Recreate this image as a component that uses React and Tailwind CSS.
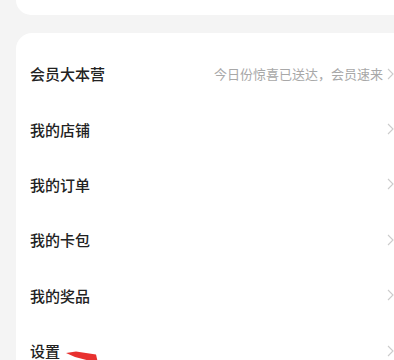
import React from 'react';

const rows = [
  { label: '会员大本营', hint: '今日份惊喜已送达，会员速来' },
  { label: '我的店铺' },
  { label: '我的订单' },
  { label: '我的卡包' },
  { label: '我的奖品' },
  { label: '设置', arrow: true },
];

const Chevron = () => (
  <svg width="7" height="12" viewBox="0 0 7 12" className="shrink-0">
    <path d="M1 1 L6 6 L1 11" fill="none" stroke="#cccccc" strokeWidth="1.1" />
  </svg>
);

export default function App() {
  return (
    <div
      className="w-[394px] h-[360px] overflow-hidden bg-[#f4f4f4] pl-4"
      style={{ fontFamily: '"Noto Sans CJK SC", "Noto Sans", sans-serif' }}
    >
      {/* carte du haut, coupée */}
      <div className="h-[15px] bg-white rounded-bl-2xl"></div>

      {/* liste */}
      <div className="mt-[18px] bg-white rounded-tl-2xl pt-[13px] pl-[14px] pr-0">
        {rows.map((row) => (
          <div key={row.label} className="relative h-[55.4px] flex items-center justify-between">
            <span className="text-[15px] font-medium text-[#222] leading-none">{row.label}</span>
            <div className="flex items-center gap-[4px]">
              {row.hint && (
                <span className="text-[13px] text-[#a8a8a8] leading-none">{row.hint}</span>
              )}
              <Chevron />
            </div>
            {row.arrow && (
              <svg className="absolute left-[36px] top-[28px]" width="50" height="20" viewBox="0 0 50 20">
                <path d="M0 2 L10 0.5 L30 3.5 L32 12 L9 6 Z" fill="#e8312f" />
              </svg>
            )}
          </div>
        ))}
      </div>
    </div>
  );
}
